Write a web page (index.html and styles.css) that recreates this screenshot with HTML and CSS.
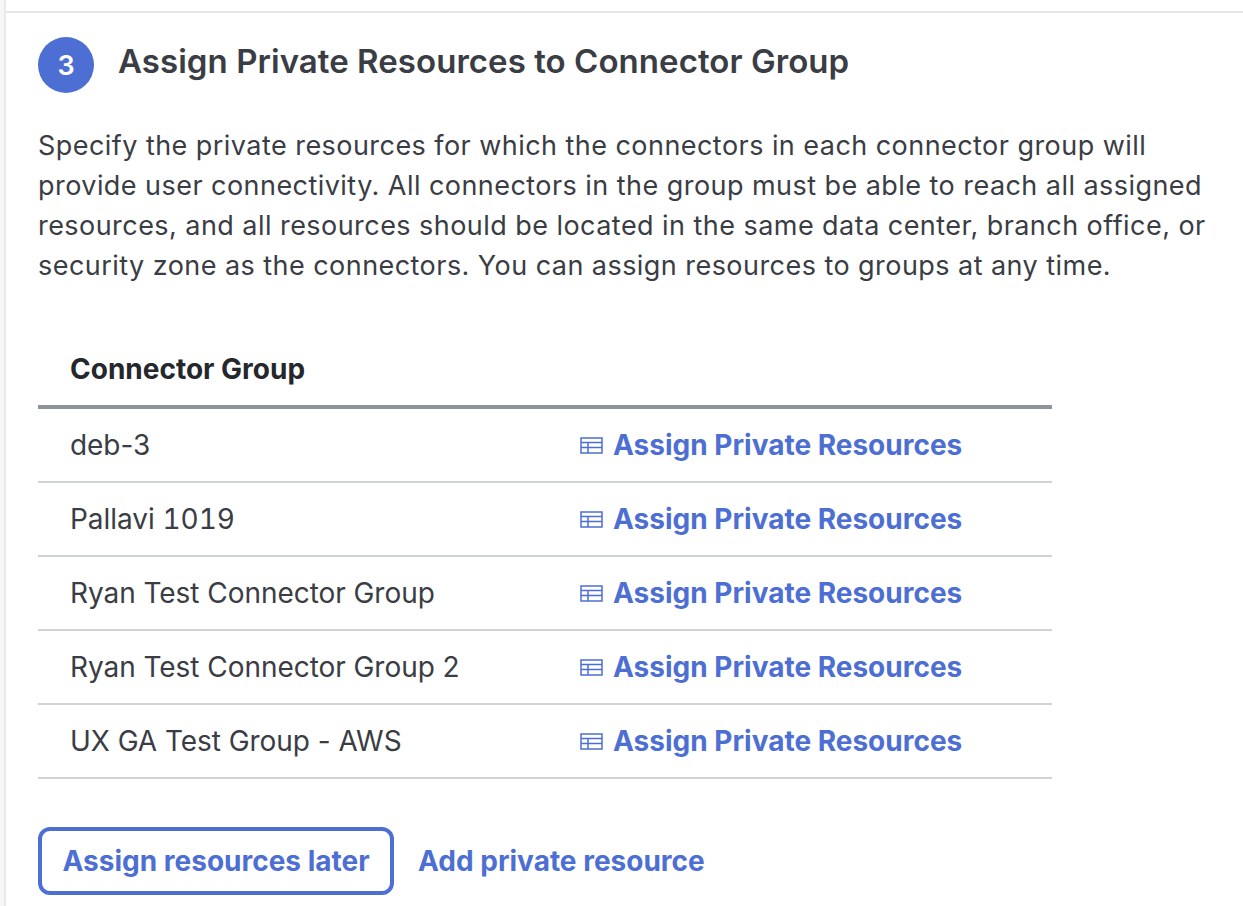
FILE: index.html
```html
<!DOCTYPE html>
<html lang="en">
<head>
  <meta charset="UTF-8" />
  <title>Assign Private Resources</title>
  <meta name="viewport" content="width=device-width, initial-scale=1.0"/>
  <link rel="stylesheet" href="styles.css">
</head>
<body>

  <div class="frame">
    <section class="step">
      <div class="step-header">
        <span class="step-number">3</span>
        <h2>Assign Private Resources to Connector Group</h2>
      </div>

      <p class="step-text">Specify the private resources for which the connectors in each connector group will provide user connectivity. All connectors in the group must be able to reach all assigned resources, and all resources should be located in the same data center, branch office, or security zone as the connectors. You can assign resources to groups at any time.</p>

      <table class="groups">
        <thead>
          <tr><th colspan="2">Connector Group</th></tr>
        </thead>
        <tbody>
          <tr>
            <td>deb-3</td>
            <td class="action"><a href="#"><svg class="icon" viewBox="0 0 23 17"><path d="M1 1h21v15H1zM1 5.500h21M1 10.500h21M8 5.500v10.500"/></svg>Assign Private Resources</a></td>
          </tr>
          <tr>
            <td>Pallavi <span class="num">1019</span></td>
            <td class="action"><a href="#"><svg class="icon" viewBox="0 0 23 17"><path d="M1 1h21v15H1zM1 5.500h21M1 10.500h21M8 5.500v10.500"/></svg>Assign Private Resources</a></td>
          </tr>
          <tr>
            <td>Ryan Test Connector Group</td>
            <td class="action"><a href="#"><svg class="icon" viewBox="0 0 23 17"><path d="M1 1h21v15H1zM1 5.500h21M1 10.500h21M8 5.500v10.500"/></svg>Assign Private Resources</a></td>
          </tr>
          <tr>
            <td>Ryan Test Connector Group 2</td>
            <td class="action"><a href="#"><svg class="icon" viewBox="0 0 23 17"><path d="M1 1h21v15H1zM1 5.500h21M1 10.500h21M8 5.500v10.500"/></svg>Assign Private Resources</a></td>
          </tr>
          <tr>
            <td>UX GA Test Group - AWS</td>
            <td class="action"><a href="#"><svg class="icon" viewBox="0 0 23 17"><path d="M1 1h21v15H1zM1 5.500h21M1 10.500h21M8 5.500v10.500"/></svg>Assign Private Resources</a></td>
          </tr>
        </tbody>
      </table>

      <div class="actions">
        <button type="button" class="later-button">Assign resources later</button>
        <a href="#" class="add-link">Add private resource</a>
      </div>
    </section>
  </div>

</body>
</html>
```

FILE: styles.css
```css
html, body {
  height: 100%;
}

body {
  margin: 0;
  box-sizing: border-box;
  overflow: hidden;
  border-left: 4px solid #f6f6f6;
  font-family: 'Inter', sans-serif;
  background-color: #fff;
  color: #2f3237;
}

.frame {
  height: 100%;
  box-sizing: border-box;
  padding-top: 11px;
  border-left: 2px solid #e9e9ec;
}

.step {
  height: 100%;
  box-sizing: border-box;
  border-top: 2px solid #e6e6ea;
  padding: 24px 0 0 32px;
}

.step-header {
  display: flex;
  align-items: center;
  gap: 24px;
}

.step-number {
  width: 56px;
  height: 56px;
  border-radius: 50%;
  background-color: #4d6fd3;
  color: #fff;
  font-size: 27px;
  font-weight: 600;
  display: flex;
  align-items: center;
  justify-content: center;
}

h2 {
  margin: 0 0 8px;
  font-size: 33px;
  font-weight: 600;
  letter-spacing: 0.05px;
  color: #3a3d44;
}

.step-text {
  margin: 33px 0 0;
  width: 1180px;
  font-size: 27px;
  line-height: 40px;
  letter-spacing: 0.45px;
  color: #3a3d44;
}

.groups {
  margin-top: 47px;
  width: 1014px;
  border-collapse: collapse;
  font-size: 28px;
}

.groups th {
  text-align: left;
  font-weight: 700;
  height: 72px;
  padding: 0 0 0 32px;
  color: #24272c;
  border-bottom: 4px solid #8f939b;
}

.groups td {
  height: 72px;
  padding: 0 0 0 32px;
  letter-spacing: -0.05px;
  color: #3a3d44;
  border-bottom: 2px solid #cfd2d6;
}

.groups td.action {
  width: 472px;
  padding-left: 0;
}

.num {
  font-variant-numeric: tabular-nums;
}

.groups a {
  display: flex;
  align-items: center;
  gap: 10px;
  color: #4d6fd3;
  font-weight: 700;
  letter-spacing: 0;
  text-decoration: none;
}

.icon {
  width: 23px;
  height: 17px;
  fill: none;
  stroke: #4d6fd3;
  stroke-width: 1.5;
}

.actions {
  margin-top: 48px;
  display: flex;
  align-items: center;
  gap: 24px;
}

.later-button {
  height: 68px;
  padding: 0 20.5px;
  border: 4px solid #4d6fd3;
  border-radius: 12px;
  background-color: #fff;
  color: #4d6fd3;
  font-family: inherit;
  font-size: 28px;
  font-weight: 700;
}

.add-link {
  color: #4d6fd3;
  font-size: 28px;
  font-weight: 700;
  text-decoration: none;
}
```
